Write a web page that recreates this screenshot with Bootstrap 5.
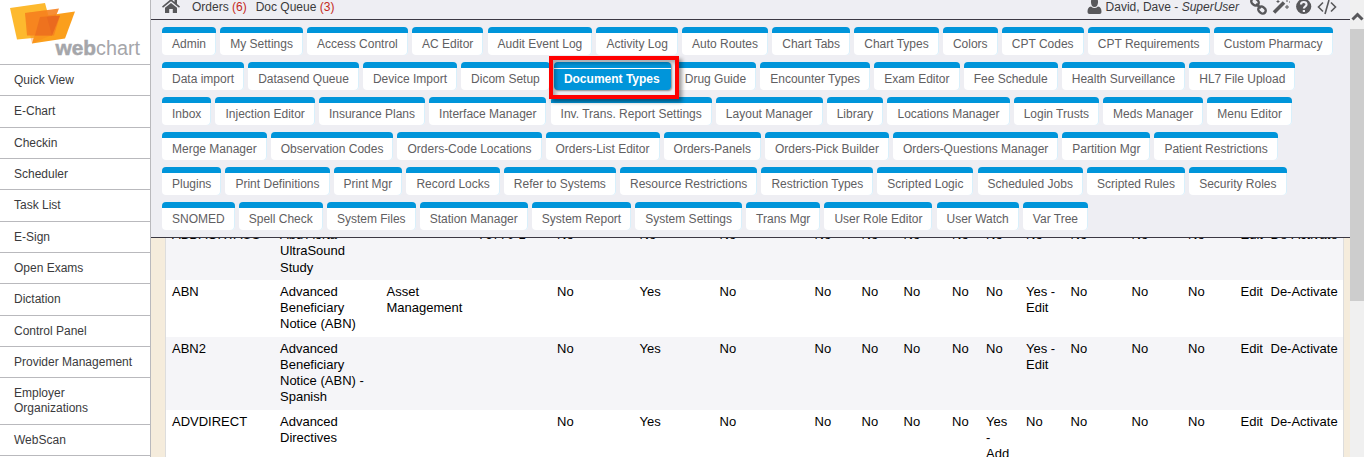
<!DOCTYPE html>
<html lang="en">
<head>
<meta charset="utf-8">
<title>WebChart - Document Types</title>
<link href="https://cdn.jsdelivr.net/npm/bootstrap@5.3.0/dist/css/bootstrap.min.css" rel="stylesheet">
<style>
html,body{height:100%;overflow:hidden}
body{font-family:"Liberation Sans",Arial,sans-serif;font-size:12px;line-height:15px;color:#3a3a3c;background:#fff}
.side{width:151px;border-right:1px solid #b9b9bd;background:#fff}
.brand-box{height:64px}
.side .nav-link{color:#3a3a3c;padding:8px 10px 7.35px 14px;border-top:1px solid #b9b9bd;min-height:31.35px}
.main-pane{width:1199px;background:#f5ecdc}
.head-pane{height:238px;background:#eeeef3;border-bottom:1px solid #3b3843;z-index:2}
.topbar{height:20px;border-bottom:1px solid #3b3843;padding-left:11px;padding-right:12px}
.topbar span,.topbar svg{display:block;flex:none}
.after-home{margin-left:12px}
.after-orders{margin-left:9px}
.after-user{margin-left:4px}
.tools{margin-left:11px}
.cnt{color:#c4281c}
.tabs-area{padding:7px 0 0 11px}
.tabrow{gap:4.1px;height:35px}
.tabrow:nth-child(1){gap:4.2px}
.tabrow:nth-child(4){gap:4px}
.tab-item{height:28px;border-radius:4px;border-top:6px solid #0095da;background:#fff;color:#5f6062;padding:3px 10px 0;line-height:16px;white-space:nowrap;flex:none;box-shadow:inset -1px 0 #d9f0fb;text-decoration:none}
.tab-item.current{background:#0095da;color:#fff;font-weight:700;box-shadow:inset 0 1px #fff,1px 1px 2px #888;padding-right:11px}
.marker{position:absolute;left:-5px;top:-6px;width:130px;height:43px;border:4px solid #f00;box-shadow:3px 3px 4px rgba(0,0,0,.4),inset 3px 3px 4px rgba(0,0,0,.3);z-index:3}
.data-box{margin:-15px 6px 0 14px;border-left:1px solid #ddd;border-right:1px solid #ddd;background:#fff}
.doc-table{table-layout:fixed;width:1177px;font-size:13px;line-height:16.25px;color:#000}
.doc-table td{padding:4px 0 4px 6px;vertical-align:top}
.doc-table tr:nth-child(odd){background:#f5f5f8}
.scroller{width:14px;background:#f0f0f0}
.scroller .thumb{height:272px;background:#cdcdcd}
.scroller .arrow{height:29px}
</style>
</head>
<body>
<div class="d-flex h-100">
<aside class="side flex-shrink-0 overflow-hidden">
<div class="brand-box"><svg width="150" height="64"><path d="M10 8 45 3 54 36 17 39.500Z" fill="#fdb92e"/><path d="M40 16.500 75 11.500 65 38.500 32 43.500Z" fill="#fb9f1c"/><path d="M25 13 59 8.500 56 16 60 16 54 35.500 27 35.500Z" fill="#f6821f" opacity=".9"/><path d="M40 17 60 15.500 52 35.500 35 35.500Z" fill="#ea6a1e"/><path d="M25 13 45 10.500 52 35 32 43.500Z" fill="#f6821f" opacity=".35"/><text x="55.500" y="55" font-size="20" font-weight="700" fill="#a5a6aa" stroke="#a5a6aa" stroke-width=".5" textLength="40.500" lengthAdjust="spacingAndGlyphs">web</text><text x="96" y="55" font-size="20" fill="#a5a6aa" textLength="44" lengthAdjust="spacingAndGlyphs">chart</text></svg></div>
<nav class="nav flex-column flex-nowrap" id="sideNav"></nav>
</aside>
<main class="main-pane flex-shrink-0 overflow-hidden">
<header class="head-pane position-relative">
<div class="topbar d-flex align-items-start">
<svg width="18" height="15" viewBox="0 0 18 15" fill="#58585b"><path d="M9 -1 0 6.500 1 7.700 9 1.200 17 7.700 18 6.500 15 4V0H12.500V2Z"/><path d="M3 7.800 9 3 15 7.800V13H10.800V9H7.200V13H3Z"/></svg>
<span class="after-home">Orders <span class="cnt d-inline">(6)</span></span><span class="after-orders">Doc Queue <span class="cnt d-inline">(3)</span></span>
<svg class="ms-auto" width="15" height="15" fill="#58585b"><path d="M7.500-2C4.500-2 3.800 0 4 2.500 4.200 5 5.200 7 7.500 7S10.800 5 11 2.500C11.200 0 10.500-2 7.500-2ZM4 6.500C1.500 7 .5 8.500.5 12Q.5 14 2.500 14H12.500Q14.500 14 14.500 12C14.500 8.500 13.500 7 11 6.500Q7.500 9.500 4 6.500Z"/></svg>
<span class="after-user">David, Dave - <i>SuperUser</i></span>
<svg class="tools" width="88" height="16"><g fill="none" stroke="#58585b" stroke-width="2.4"><rect x="1" y="-1" width="8" height="6" rx="3" transform="rotate(42 5 2)"/><rect x="8" y="7" width="8" height="6" rx="3" transform="rotate(42 12 10)"/><path d="M6 4 11 8"/></g><path d="M24 12.500 34 2.500" stroke="#58585b" stroke-width="3.600"/><path d="M28 0V3M26.500 1.500H29.500M37 0V2M37 5V9M35 7H39M39 2H40" stroke="#58585b"/><circle cx="53.700" cy="6.500" r="7.600" fill="#58585b"/><path d="M51 4.500Q51 2 53.800 2T56.500 4.500C56.500 6.500 53.900 6.200 53.900 8.500M53.900 10V12" fill="none" stroke="#eeeef3" stroke-width="2.200"/><path d="M73 2.500 68.500 7 73 11.500M81 2.500 85.500 7 81 11.500M79 0 75 14" fill="none" stroke="#58585b" stroke-width="1.600"/></svg>
</div>
<div class="tabs-area" id="tabs"></div>
</header>
<div class="data-box"><table class="doc-table"><colgroup id="cols"></colgroup><tbody id="rows"></tbody></table></div>
</main>
<div class="scroller flex-shrink-0"><div class="arrow"><svg width="14" height="29"><path d="M2.500 19.500 7.500 14.500 12.500 19.500" fill="none" stroke="#58585b" stroke-width="3"/></svg></div><div class="thumb"></div></div>
</div>
<script src="https://cdn.jsdelivr.net/npm/bootstrap@5.3.0/dist/js/bootstrap.bundle.min.js"></script>
<script>
const side=['Quick View','E-Chart','Checkin','Scheduler','Task List','E-Sign','Open Exams','Dictation','Control Panel','Provider Management','Employer Organizations','WebScan',''];
sideNav.innerHTML=side.map(s=>`<a class="nav-link">${s}</a>`).join('');
const tabRows=['Admin|My Settings|Access Control|AC Editor|Audit Event Log|Activity Log|Auto Routes|Chart Tabs|Chart Types|Colors|CPT Codes|CPT Requirements|Custom Pharmacy',
'Data import|Datasend Queue|Device Import|Dicom Setup|Document Types|Drug Guide|Encounter Types|Exam Editor|Fee Schedule|Health Surveillance|HL7 File Upload',
'Inbox|Injection Editor|Insurance Plans|Interface Manager|Inv. Trans. Report Settings|Layout Manager|Library|Locations Manager|Login Trusts|Meds Manager|Menu Editor',
'Merge Manager|Observation Codes|Orders-Code Locations|Orders-List Editor|Orders-Panels|Orders-Pick Builder|Orders-Questions Manager|Partition Mgr|Patient Restrictions',
'Plugins|Print Definitions|Print Mgr|Record Locks|Refer to Systems|Resource Restrictions|Restriction Types|Scripted Logic|Scheduled Jobs|Scripted Rules|Security Roles',
'SNOMED|Spell Check|System Files|Station Manager|System Report|System Settings|Trans Mgr|User Role Editor|User Watch|Var Tree'];
tabs.innerHTML=tabRows.map(r=>'<div class="tabrow d-flex">'+r.split('|').map(t=>t==='Document Types'?`<div class="position-relative"><a class="tab-item current d-block">${t}</a><div class="marker"></div></div>`:`<a class="tab-item">${t}</a>`).join('')+'</div>').join('');
const x=[166,274,380.5,472,551,633.5,713.5,808.5,855.5,897.5,946,980,1020,1064.5,1125.5,1182,1234.5,1264.5,1343];
cols.innerHTML=x.slice(1).map((v,i)=>`<col style="width:${v-x[i]}px">`).join('');
const data=['ABDAORTAUS|Abd Aorta<br>UltraSound<br>Study||76770-1|No|No|No|No|No|No|No|No|No|No|No|No|Edit|De-Activate',
'ABN|Advanced<br>Beneficiary<br>Notice (ABN)|Asset<br>Management||No|Yes|No|No|No|No|No|No|Yes -<br>Edit|No|No|No|Edit|De-Activate',
'ABN2|Advanced<br>Beneficiary<br>Notice (ABN) -<br>Spanish|||No|Yes|No|No|No|No|No|No|Yes -<br>Edit|No|No|No|Edit|De-Activate',
'ADVDIRECT|Advanced<br>Directives|||No|Yes|No|No|No|No|No|Yes<br>-<br>Add|No|No|No|No|Edit|De-Activate'];
rows.innerHTML=data.map(r=>'<tr>'+r.split('|').map(c=>`<td>${c}</td>`).join('')+'</tr>').join('');
</script>
</body>
</html>
